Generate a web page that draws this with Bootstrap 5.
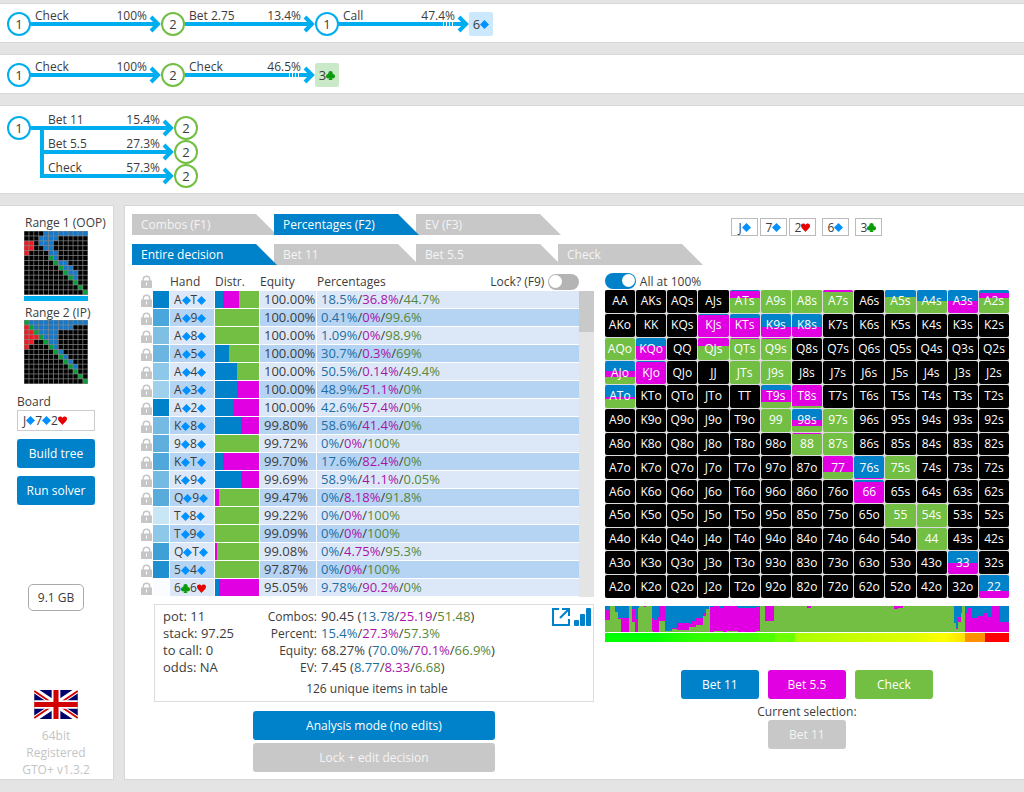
<!DOCTYPE html>
<html lang="en">
<head>
<meta charset="utf-8">
<meta name="viewport" content="width=device-width, initial-scale=1">
<title>GTO+</title>
<link href="https://cdn.jsdelivr.net/npm/bootstrap@5.3.0/dist/css/bootstrap.min.css" rel="stylesheet">
<style>
:root{--blue:#0082ca;--mag:#e100e1;--green:#72bf44;--cyan:#00aeef}
body{font-family:"Open Sans","Noto Sans",sans-serif;font-size:12px;line-height:17px;color:#3c3c3c;background:#e4e4e4;gap:11px;padding:3px 0 12px}
.panel{background:#fff;border:1px solid #d8d8d8;border-width:1px 0}
.line-panel{padding:8px 7px 6px}
.tree-panel{padding:10px 7px 5px}
.node{width:24px;height:24px;border:2px solid var(--cyan);border-radius:50%;font-size:13px;line-height:20px;text-align:center;flex:none}
.node.reply{border-color:var(--green)}
.edge{display:grid;width:130px;height:24px}
.edge.branch{width:143px}
.edge>*{grid-area:1/1}
.edge .caption{line-height:8px;padding:0 14px 0 4px;z-index:1}
.edge.branch .caption{padding-left:17px}
.edge svg{display:block;overflow:visible}
.street{width:24px;height:24px;border-radius:2px;font-size:13px;background:#cbe8fc}
.street.club{background:#c9e9c9}
.suit{width:9px;height:9px;flex:none;vertical-align:-1px}
.workspace{column-gap:10px}
.side{flex:0 0 114px;min-width:0;border-right-width:1px;padding:8px 18px 1px 17px}
.main{min-width:0;border-left-width:1px;padding:8px 15px 7px 7px}
.thumb{padding-left:7px}
.range{width:65px;height:65px;display:block}
.active-bar{height:5px;width:64px;background:var(--cyan)}
.board-box{height:21px;border:1px solid #ccc;padding:0 5px;outline:0;white-space:nowrap}
.flag{margin-top:79px}
.act{border:0;border-radius:3px;color:#fff;background:var(--blue);height:29px;padding:0 4px;font-size:12px;line-height:17px}
.act.mag{background:var(--mag)}.act.green{background:var(--green)}
.act:disabled{background:#c8c8c8;color:#f4f4f4;opacity:1}
.mem{border:1px solid #aaa;border-radius:5px;background:#fff;color:inherit;height:27px;width:56px;padding:0}
.foot{color:#c4c4c4;white-space:nowrap}
.tabs{gap:9px}
.tabbtn{border:0;width:145px;height:21px;margin-right:-3px;padding:0 9px;text-align:left;color:#f4f4f4;background:#c8c8c8;clip-path:polygon(0 0,124px 0,100% 100%,0 100%);position:relative;line-height:21px}
.tabbtn.active{background:var(--blue);color:#fff;z-index:1}
.cards{gap:2px;margin:4px 0 0 31px}
.pcard{width:27px;height:18px;border:1px solid #bbb}
.split{display:grid;grid-template-columns:minmax(0,8fr) minmax(0,7fr);column-gap:11px;margin-top:7px}
.hands{table-layout:fixed;width:100%;border-collapse:separate;border-spacing:0}
.hands th{font-weight:400;height:19px;padding:0;white-space:nowrap}
.hands td{height:18px;padding:0 4px;border:0 solid #fff;border-width:0 1px 1px 0;background:#dce8f8;white-space:nowrap}
.hands tr:nth-child(even) td{background:#b5d3f3}
.hands tr td.lockcell{background:#fff;padding:0 0 0 9px;border:0}
.hands td.fill{padding:0;border-width:0 1px 1px 0}
.hands .num{font-size:13px}
.fill>div{height:17px}
.hands td:last-child{border-right:0}
.c-lock{width:21px}.c-weight{width:17px}.c-hand{width:45px}.c-eq{width:57px}
.lock{width:11px;height:13px;display:block;fill:#c6c6c6}
.hands th .lock{margin-left:9px}
.b{color:#1c6ea4}.m{color:#a814a8}.g{color:#56873a}
.scroller{width:15px;margin-top:19px;background:#e4e4e4}
.scroller div{height:41px;background:#c9c9c9}
.toggle{appearance:none;width:31px;height:16px;border-radius:8px;background:#b4b4b4;margin:0;display:block;position:relative}
.toggle::after{content:"";position:absolute;width:13px;height:13px;border-radius:50%;background:#fff;left:1px;top:1px}
.toggle:checked{background:var(--blue)}
.toggle:checked::after{left:17px}
.all-toggle{height:18px}
.matrix{display:grid;grid-template-columns:repeat(13,1fr);grid-template-rows:repeat(13,1fr);gap:1px;height:308px;background:#ddd}
.matrix div{border-radius:2px;background:#000;color:#fff;display:flex;align-items:center;justify-content:center;line-height:16px}
.chart{display:block;width:100%;height:26px;background:var(--green)}
.heat{height:9px;margin-top:1px;background:linear-gradient(90deg,#0f0 0 11%,#1fff00 18%,#3f0 24%,#44ff00 38%,#50ff00 38% 42%,#6cff00 42% 47%,#a8ff00 47%,#c4ff00 60%,#dcff00 75%,#ff0 84%,#ffe000 89%,#ff9000 89% 94%,#f00 94%)}
.bet-row{gap:9px;margin-top:28px}
.stats{border:1px solid #ddd;margin:7px 0 0 22px;padding:3px 2px 4px 8px}
.stats .num{font-size:13px}
.stats .spot{width:70px}
.stats .labels{width:84px;text-align:right}
.tool{border:0;background:none;padding:0;display:block;line-height:0}
.modes{gap:3px;margin:9px 0 0 22px}
.wide{width:242px}
.small-act{width:78px}
</style>
</head>
<body class="d-flex flex-column min-vh-100">
<svg width="0" height="0" class="position-absolute" aria-hidden="true">
  <symbol id="d" viewBox="0 0 9 9"><path fill="#0091ff" d="M4.500 0 9 4.500 4.500 9 0 4.500z"/></symbol>
  <symbol id="h" viewBox="0 0 9 9"><path fill="#e60000" d="M4.500 9C3 7 0 5.200 0 2.700 0 .2 3.400-.4 4.500 2 5.600-.4 9 .2 9 2.700 9 5.200 6 7 4.500 9z"/></symbol>
  <symbol id="c" viewBox="0 0 9 9"><g fill="#0a9a0a"><circle cx="4.500" cy="2.200" r="2.200"/><circle cx="2.200" cy="5.300" r="2.200"/><circle cx="6.800" cy="5.300" r="2.200"/><path d="M3.500 4h2v3l1 2h-4l1-2z"/></g></symbol>
  <symbol id="lock" viewBox="0 0 11 13"><path fill-rule="evenodd" d="M0 5.500h1.500V4.500a4 4 0 0 1 8 0v1H11V13H0zM3 5.500h5V4.500a2.500 2.500 0 0 0-5 0zM5 7.500v3h1v-3z"/></symbol>
</svg>

<section class="panel line-panel d-flex align-items-center" data-line="1|Check|100%|2|Bet 2.75|13.4%|1|Call|47.4%|6d"></section>
<section class="panel line-panel d-flex align-items-center" data-line="1|Check|100%|2|Check|46.5%|3c"></section>
<section class="panel tree-panel d-flex align-items-start">
  <div class="node">1</div>
  <div id="branches"></div>
</section>

<div class="workspace d-flex flex-grow-1">
  <aside class="panel side d-flex flex-column">
    <div class="ps-2 text-nowrap">Range 1 (OOP)</div>
    <div class="thumb"><svg class="range" id="r1" viewBox="0 0 65 65"></svg><div class="active-bar"></div></div>
    <div class="ps-2 text-nowrap pt-1 lh-sm">Range 2 (IP)</div>
    <div class="thumb"><svg class="range" id="r2" viewBox="0 0 65 65"></svg></div>
    <div class="mt-2" id="boardLabel">Board</div>
    <div class="board-box d-flex align-items-center" role="textbox" contenteditable="true" aria-labelledby="boardLabel" data-cards="Jd7d2h"></div>
    <button class="act w-100 mt-2" type="button">Build tree</button>
    <button class="act w-100 mt-2" type="button">Run solver</button>
    <button class="mem mx-auto mt-auto" type="button">9.1 GB</button>
    <svg class="mx-auto flag" width="44" height="29" viewBox="0 0 60 40">
      <rect width="60" height="40" fill="#00006b"/>
      <path d="M0 0 60 40M60 0 0 40" stroke="#fff" stroke-width="8"/>
      <path d="M0 1.500 27 19.500M60 1.500 33 19.500M0 38.500 27 20.500M60 38.500 33 20.500" stroke="#d20000" stroke-width="2.500"/>
      <path d="M30 0V40M0 20H60" stroke="#fff" stroke-width="12"/>
      <path d="M30 0V40M0 20H60" stroke="#d20000" stroke-width="7"/>
    </svg>
    <div class="foot d-flex flex-column align-items-center mt-2"><span>64bit</span><span>Registered</span><span>GTO+ v1.3.2</span></div>
  </aside>

  <main class="panel main flex-grow-1">
    <div class="d-flex align-items-start">
      <div class="tabs d-flex flex-column">
        <div class="d-flex" role="tablist">
          <button class="tabbtn" role="tab" type="button">Combos (F1)</button>
          <button class="tabbtn active" role="tab" type="button">Percentages (F2)</button>
          <button class="tabbtn" role="tab" type="button">EV (F3)</button>
        </div>
        <div class="d-flex" role="tablist">
          <button class="tabbtn active" role="tab" type="button">Entire decision</button>
          <button class="tabbtn" role="tab" type="button">Bet 11</button>
          <button class="tabbtn" role="tab" type="button">Bet 5.5</button>
          <button class="tabbtn" role="tab" type="button">Check</button>
        </div>
      </div>
      <div class="cards d-flex" id="cards"></div>
    </div>

    <div class="split">
      <div>
        <div class="d-flex">
          <table class="hands flex-grow-1">
            <colgroup><col class="c-lock"><col class="c-weight"><col class="c-hand"><col class="c-hand"><col class="c-eq"><col></colgroup>
            <thead><tr>
              <th><svg class="lock"><use href="#lock"/></svg></th><th></th><th>Hand</th><th>Distr.</th><th>Equity</th>
              <th><div class="d-flex justify-content-between">Percentages<label class="d-flex gap-1 align-items-center">Lock? (F9) <input type="checkbox" class="toggle"></label></div></th>
            </tr></thead>
            <tbody id="rows"></tbody>
          </table>
          <div class="scroller"><div></div></div>
        </div>
        <div class="stats">
          <div class="d-flex">
            <div class="spot num text-nowrap">pot: 11<br>stack: 97.25<br>to call: 0<br>odds: NA</div>
            <div class="labels">Combos:<br>Percent:<br>Equity:<br>EV:</div>
            <div class="num ps-1 text-nowrap">
              90.45 (<span class="b">13.78</span>/<span class="m">25.19</span>/<span class="g">51.48</span>)<br>
              <span class="b">15.4%</span>/<span class="m">27.3%</span>/<span class="g">57.3%</span><br>
              68.27% (<span class="b">70.0%</span>/<span class="m">70.1%</span>/<span class="g">66.9%</span>)<br>
              7.45 (<span class="b">8.77</span>/<span class="m">8.33</span>/<span class="g">6.68</span>)
            </div>
            <div class="ms-auto d-flex gap-1 align-items-start">
              <button class="tool" type="button" aria-label="Open in window"><svg width="18" height="18" fill="none" stroke="#0082ca" stroke-width="2"><path d="M7 1H1v16h16v-6M10 1h7v7M16 2 8 10"/></svg></button>
              <button class="tool" type="button" aria-label="Chart"><svg width="17" height="18" fill="#0082ca"><rect y="12" width="5" height="6" rx="1"/><rect x="6" y="6" width="5" height="12" rx="1"/><rect x="12" width="5" height="18" rx="1"/></svg></button>
            </div>
          </div>
          <div class="text-center mt-1">126 unique items in table</div>
        </div>
        <div class="modes d-flex flex-column align-items-center">
          <button class="act wide" type="button">Analysis mode (no edits)</button>
          <button class="act wide" type="button" disabled>Lock + edit decision</button>
        </div>
      </div>

      <div>
        <label class="all-toggle d-flex gap-1 align-items-center"><input type="checkbox" class="toggle" checked>All at 100%</label>
        <div class="matrix" id="matrix"></div>
        <svg class="chart mt-2" viewBox="18 47 1208 76" preserveAspectRatio="none" shape-rendering="crispEdges" id="chart"></svg>
        <div class="heat"></div>
        <div class="bet-row d-flex justify-content-center">
          <button class="act small-act" type="button">Bet 11</button>
          <button class="act small-act mag" type="button">Bet 5.5</button>
          <button class="act small-act green" type="button">Check</button>
        </div>
        <div class="text-center mt-1">Current selection:</div>
        <div class="text-center"><button class="act small-act" type="button" disabled>Bet 11</button></div>
      </div>
    </div>
  </main>
</div>

<script src="https://cdn.jsdelivr.net/npm/bootstrap@5.3.0/dist/js/bootstrap.bundle.min.js"></script>
<script>
const BLUE = '#0082ca', MAG = '#e100e1', GREEN = '#72bf44';
const $ = id => document.getElementById(id);
const suit = s => `<svg class="suit"><use href="#${s}"/></svg>`;
const cards = t => t.replace(/[dhc]/g, suit);

/* betting lines */
const head = (w, y) => `<path d="M${w - 10} ${y - 7} L${w - 3} ${y} L${w - 10} ${y + 7}" fill="none" stroke="#00aeef" stroke-width="4"/>`;
const edge = (a, p, dashed) => `<div class="edge"><svg width="130" height="24"><rect y="10" width="126" height="4" fill="#00aeef"/>${
  dashed ? [104, 107, 110, 113].map(x => `<rect x="${x}" y="10" width="1" height="4" fill="#fff"/>`).join('') : ''}${head(130, 12)}</svg>
  <div class="caption d-flex justify-content-between"><span>${a}</span><span>${p}</span></div></div>`;
const node = n => `<div class="node ${n === '2' ? 'reply' : ''}">${n}</div>`;
document.querySelectorAll('[data-line]').forEach(el => {
  const p = el.dataset.line.split('|');
  let out = '';
  for (let i = 0; i + 3 < p.length; i += 3) out += node(p[i]) + edge(p[i + 1], p[i + 2], i + 4 === p.length);
  const last = p[p.length - 1];
  el.innerHTML = out + `<div class="street d-flex align-items-center justify-content-center ${last[1] === 'c' ? 'club' : ''}">${cards(last)}</div>`;
});
$('branches').innerHTML = [['Bet 11', '15.4%'], ['Bet 5.5', '27.3%'], ['Check', '57.3%']].map(([a, p], i) =>
  `<div class="d-flex"><div class="edge branch"><svg width="143" height="24"><rect x="${i ? 9 : 0}" y="10" width="${i ? 130 : 139}" height="4" fill="#00aeef"/>
  <rect x="9" y="${i ? 0 : 12}" width="4" height="${i === 1 ? 24 : i ? 14 : 12}" fill="#00aeef"/>${head(143, 12)}</svg>
  <div class="caption d-flex justify-content-between"><span>${a}</span><span>${p}</span></div></div>${node('2')}</div>`).join('');

/* range thumbnails: r = red, g = green, b = blue */
const ranges = {
  r1: ['....bbbbbbbbb','...bbbb......','rr.bbb.......','rr..bb.......','r....bb......','.....gb......','......gbb....','.......gbb...','........gbb..','.........gb..','..........g..','...........g.','............g'],
  r2: ['gbbbbbbbbbbbb','rgbbbbbbbb...','rrgbbbb......','rrrgbbb......','rr..gbb......','r....gb......','......gb.....','.......gb....','........gb...','.........gb..','..........g..','...........g.','............g']
};
for (const id in ranges) {
  let s = '<rect width="64" height="64" fill="#888"/>';
  ranges[id].forEach((row, y) => [...row].forEach((c, x) => {
    s += `<rect x="${x * 4.9 + .4}" y="${y * 4.9 + .4}" width="4.200" height="4.200" fill="${{r: '#ed1c24', g: '#0a9e3a', b: '#1878c8'}[c] || '#000'}"/>`;
  }));
  $(id).innerHTML = s;
}
document.querySelector('[data-cards]').innerHTML = cards('Jd7d2h');
$('cards').innerHTML = ['Jd', '7d', '2h', '6d', '3c'].map((c, i) =>
  `<div class="pcard d-flex align-items-center justify-content-center ${i > 2 ? 'ms-1' : ''}">${cards(c)}</div>`).join('');

/* hand table: hand, weight colour, equity, bet 11, bet 5.5, check */
const hands = [
  ['AdTd','#0082ca','100.00',18.5,36.8,44.7],['Ad9d','#4aa6db','100.00',0.41,0,99.6],['Ad8d','#7fbfe4','100.00',1.09,0,98.9],
  ['Ad5d','#6bb5e0','100.00',30.7,0.3,69],['Ad4d','#8dc8e8','100.00',50.5,0.14,49.4],['Ad3d','#9fd0ec','100.00',48.9,51.1,0],
  ['Ad2d','#0082ca','100.00',42.6,57.4,0],['Kd8d','#74bae2','99.80',58.6,41.4,0],['9d8d','#5eafdd','99.72',0,0,100],
  ['KdTd','#50a8da','99.70',17.6,82.4,0],['Kd9d','#74bae2','99.69',58.9,41.1,0.05],['Qd9d','#58abdb','99.47',0,8.18,91.8],
  ['Td8d','#c8e6f5','99.22',0,0,100],['Td9d','#8ec8e8','99.09',0,0,100],['QdTd','#3f9fd7','99.08',0,4.75,95.3],
  ['5d4d','#1f8fd0','97.87',0,0,100],['6c6h','#fbfcff','95.05',9.78,90.2,0]];
const split = (b, m) => `linear-gradient(DIR,${BLUE} 0 ${b}%,${MAG} ${b}% ${b + m}%,${GREEN} ${b + m}%)`;
$('rows').innerHTML = hands.map(([h, sw, eq, b, m, g]) => `<tr><td class="lockcell"><svg class="lock"><use href="#lock"/></svg></td>
  <td class="fill"><div style="background:${sw}"></div></td><td>${cards(h)}</td>
  <td class="fill"><div style="background:${split(b, m).replace('DIR', '90deg')}"></div></td><td class="num">${eq}%</td>
  <td class="num"><span class="b">${b}%</span>/<span class="m">${m}%</span>/<span class="g">${g}%</span></td></tr>`).join('');

/* 13x13 matrix: [bet 11 share, bet 5.5 share], the rest is check */
const mix = {ATs:[6,30],A9s:[0,0],A8s:[0,0],A7s:[0,7],A5s:[32,0],A4s:[50,0],A3s:[50,50],A2s:[14,22],KJs:[4,96],KTs:[18,82],K9s:[56,44],K8s:[56,44],
  AQo:[0,0],KQo:[38,62],QJs:[0,38],QTs:[0,4],Q9s:[0,6],AJo:[45,25],KJo:[4,96],JTs:[0,0],J9s:[0,0],ATo:[50,11],T9s:[20,56],T8s:[0,92],
  99:[0,0],'98s':[48,26],'97s':[0,0],88:[0,5],'87s':[0,0],77:[0,68],'76s':[97,3],'75s':[0,0],66:[10,90],55:[0,0],'54s':[0,0],44:[0,0],33:[52,48],22:[70,30]};
const R = 'AKQJT98765432';
let out = '';
for (let y = 0; y < 13; y++) for (let x = 0; x < 13; x++) {
  const n = x === y ? R[x] + R[x] : x > y ? R[y] + R[x] + 's' : R[x] + R[y] + 'o';
  out += `<div${mix[n] ? ` style="background:${split(...mix[n]).replace('DIR', '180deg')}"` : ''}>${n}</div>`;
}
$('matrix').innerHTML = out;

/* strategy by equity: x from, x to, bottom of blue, bottom of magenta */
$('chart').innerHTML = [[18,32,59,89],[48,56,65,65],[56,65,82,86],[65,90,83,123],[98,108,57,95],[108,116,84,123],[116,121,52,52],[135,142,47,50],
  [157,162,82,120],[162,172,89,123],[172,180,80,123],[180,196,47,90],[196,218,120,120],[218,232,110,115],[232,268,97,117],[268,278,100,107],[278,290,90,107],[290,310,82,102],
  [310,320,68,75],[320,330,56,56],[333,345,50,123],[345,358,48,121],[358,372,52,121],[372,383,48,123],[383,415,48,121],[415,470,52,123],[470,481,49,121],[495,522,48,92],[623,635,47,53],
  [882,895,47,56],[895,908,47,53],[1062,1066,98,98],[1066,1072,110,113],[1072,1083,80,93],[1083,1086,68,68],[1093,1096,62,123],[1096,1103,68,123],[1103,1113,54,123],[1113,1133,82,123],
  [1133,1152,75,123],[1152,1160,68,123],[1160,1172,78,123],[1172,1176,70,123],[1176,1198,47,123],[1198,1226,95,123]]
  .map(([a, b, bl, mg]) => `<rect x="${a}" y="47" width="${b - a}" height="${mg - 47}" fill="${MAG}"/><rect x="${a}" y="47" width="${b - a}" height="${bl - 47}" fill="${BLUE}"/>`).join('');
</script>
</body>
</html>
